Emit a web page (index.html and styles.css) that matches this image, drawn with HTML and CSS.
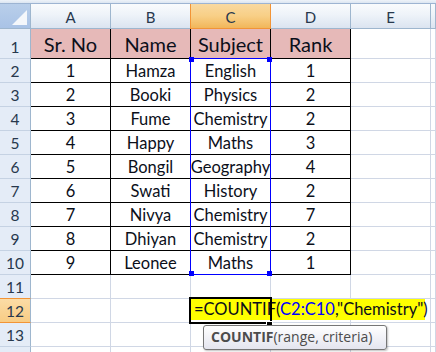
FILE: index.html
```html
<!DOCTYPE html>
<html>
<head>
<meta charset="utf-8">
<link rel="stylesheet" href="styles.css">
</head>
<body>
<div class="topstrip"></div>
<div class="sheet">
  <div class="corner"><span class="tri"></span></div>
  <div class="ch">A</div><div class="ch">B</div><div class="ch ch-sel">C</div><div class="ch">D</div><div class="ch">E</div><div class="ch"></div>

  <div class="rh r1">1</div>
  <div class="c t th">Sr. No</div><div class="c t th">Name</div><div class="c t th">Subject</div><div class="c t th">Rank</div><div class="c r1"></div><div class="c r1"></div>

  <div class="rh">2</div><div class="c t">1</div><div class="c t">Hamza</div><div class="c t">English</div><div class="c t">1</div><div class="c"></div><div class="c"></div>
  <div class="rh">3</div><div class="c t">2</div><div class="c t">Booki</div><div class="c t">Physics</div><div class="c t">2</div><div class="c"></div><div class="c"></div>
  <div class="rh">4</div><div class="c t">3</div><div class="c t">Fume</div><div class="c t">Chemistry</div><div class="c t">2</div><div class="c"></div><div class="c"></div>
  <div class="rh">5</div><div class="c t">4</div><div class="c t">Happy</div><div class="c t">Maths</div><div class="c t">3</div><div class="c"></div><div class="c"></div>
  <div class="rh">6</div><div class="c t">5</div><div class="c t">Bongil</div><div class="c t">Geography</div><div class="c t">4</div><div class="c"></div><div class="c"></div>
  <div class="rh">7</div><div class="c t">6</div><div class="c t">Swati</div><div class="c t">History</div><div class="c t">2</div><div class="c"></div><div class="c"></div>
  <div class="rh">8</div><div class="c t">7</div><div class="c t">Nivya</div><div class="c t">Chemistry</div><div class="c t">7</div><div class="c"></div><div class="c"></div>
  <div class="rh">9</div><div class="c t">8</div><div class="c t">Dhiyan</div><div class="c t">Chemistry</div><div class="c t">2</div><div class="c"></div><div class="c"></div>
  <div class="rh">10</div><div class="c t">9</div><div class="c t">Leonee</div><div class="c t">Maths</div><div class="c t">1</div><div class="c"></div><div class="c"></div>
  <div class="rh">11</div><div class="c"></div><div class="c"></div><div class="c"></div><div class="c"></div><div class="c"></div><div class="c"></div>
  <div class="rh rh-sel">12</div><div class="c"></div><div class="c"></div><div class="c"></div><div class="c"></div><div class="c"></div><div class="c"></div>
  <div class="rh">13</div><div class="c"></div><div class="c"></div><div class="c"></div><div class="c"></div><div class="c"></div><div class="c"></div>
  <div class="rh"></div><div class="c"></div><div class="c"></div><div class="c"></div><div class="c"></div><div class="c"></div><div class="c"></div>

  <div class="range"></div>
  <span class="hd hd-tl"></span><span class="hd hd-tr"></span><span class="hd hd-bl"></span><span class="hd hd-br"></span>

  <div class="editor">=COUNTIF(<span class="ref">C2:C10</span>,"Chemistry")</div>
  <div class="active"></div>
  <span class="fill"></span>

  <div class="tip"><b>COUNTIF</b>(range, criteria)</div>
</div>
</body>
</html>
```

FILE: styles.css
```css
html, body {
  margin: 0;
  padding: 0;
  background: #fff;
  width: 436px;
  height: 352px;
  overflow: hidden;
}

.topstrip {
  height: 3px;
  background: linear-gradient(#eef3f9, #dbe5f1);
  border-bottom: 1px solid #9db4d2;
}

.sheet {
  position: relative;
  display: grid;
  grid-template-columns: 31px repeat(5, 80px) 1fr;
  grid-template-rows: 25px 30px repeat(12, 24px) 24px;
  height: 348px;
  overflow: hidden;
  font-family: Lato, "Liberation Sans", sans-serif;
}

.sheet > div {
  box-sizing: border-box;
}

.corner {
  background: linear-gradient(#b9cfea, #a9c3e6);
  border-right: 1px solid #9eb6ce;
  border-bottom: 1px solid #9eb6ce;
  position: relative;
}

.tri {
  position: absolute;
  right: 3px;
  bottom: 3px;
  width: 0;
  height: 0;
  border-left: 15px solid transparent;
  border-bottom: 15px solid #f4f7fb;
}

.ch {
  background: linear-gradient(#f9fbfd 0%, #eef3f9 45%, #dbe4f0 100%);
  border-right: 1px solid #9eb6ce;
  border-bottom: 1px solid #9eb6ce;
  display: flex;
  align-items: flex-end;
  justify-content: center;
  padding-bottom: 2px;
  font-size: 15px;
  line-height: 18px;
  color: #27384d;
}

.ch-sel {
  background: linear-gradient(#f9d9a0 0%, #f8cf86 50%, #f1b65a 100%);
  border-right: 1px solid #f29436;
  border-left: 1px solid #f29436;
  border-bottom: 1px solid #f29436;
  margin-left: -1px;
}

.rh {
  background: #e4ecf7;
  border-right: 1px solid #9eb6ce;
  border-bottom: 1px solid #c5d2e3;
  display: flex;
  align-items: flex-end;
  justify-content: center;
  padding-bottom: 2px;
  font-size: 15.5px;
  line-height: 18px;
  color: #27384d;
}

.rh-sel {
  background: linear-gradient(#fbdca6, #f8cc84);
  border-top: 1px solid #f29436;
  border-bottom: 1px solid #f29436;
  margin-top: -1px;
}

.c {
  border-right: 1px solid #d0d7e5;
  border-bottom: 1px solid #d0d7e5;
  display: flex;
  align-items: flex-end;
  justify-content: center;
  padding-bottom: 2px;
  font-size: 16.5px;
  line-height: 18px;
  color: #0b0f1a;
  white-space: nowrap;
  overflow: hidden;
}

.c.t {
  border-right-color: #000;
  border-bottom-color: #000;
}

.c.th {
  background: #e6b9b8;
  font-size: 20px;
  line-height: 22px;
  padding-bottom: 3px;
}

.range {
  position: absolute;
  left: 190px;
  top: 54px;
  width: 81px;
  height: 217px;
  border: 1px solid #0000ff;
  box-sizing: border-box;
}

.hd {
  position: absolute;
  width: 5px;
  height: 5px;
  background: #0000ff;
}
.hd-tl { left: 189px; top: 53px; }
.hd-tr { left: 267px; top: 53px; }
.hd-bl { left: 189px; top: 267px; }
.hd-br { left: 267px; top: 267px; }

.editor {
  position: absolute;
  left: 191px;
  top: 295px;
  width: 234px;
  height: 21px;
  background: #ffff00;
  font-size: 16.5px;
  line-height: 21px;
  padding-left: 3px;
  color: #0b0f1a;
  white-space: nowrap;
}

.ref { color: #0000ff; }

.active {
  position: absolute;
  left: 189px;
  top: 293px;
  width: 83px;
  height: 27px;
  border: 2px solid #000;
}

.fill {
  position: absolute;
  left: 267px;
  top: 318px;
  width: 5px;
  height: 5px;
  background: #000;
  box-shadow: 0 0 0 1px #fff;
}

.tip {
  position: absolute;
  left: 203px;
  top: 321px;
  width: 184px;
  height: 25px;
  box-sizing: border-box;
  border: 1px solid #767676;
  border-radius: 3px;
  background: linear-gradient(#ffffff, #e4e5ef);
  box-shadow: 1px 1px 2px rgba(0,0,0,0.25);
  font-family: "Open Sans", "Noto Sans", sans-serif;
  font-size: 14px;
  line-height: 22px;
  padding-left: 7px;
  color: #4c4c4c;
  white-space: nowrap;
}

.tip b { font-weight: 700; }
```
